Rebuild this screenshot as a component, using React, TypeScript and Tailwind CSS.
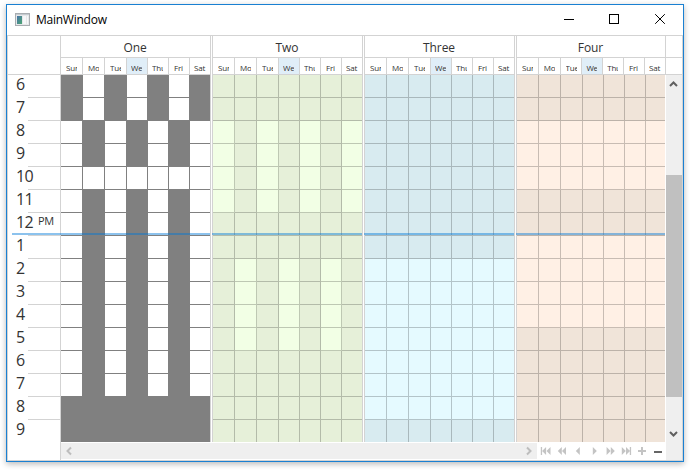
import React from 'react';

type Tone = { dark: string; light: string };
type Group = { name: string; tone: Tone; isLight: (hour: number, day: number) => boolean };

const DAYS = ['Sun', 'Mon', 'Tue', 'Wed', 'Thu', 'Fri', 'Sat'];
const DAY_WIDTHS = ['w-[22px]', 'w-[22px]', 'w-[22px]', 'w-[21px]', 'w-[21px]', 'w-[21px]', 'flex-1'];
const LABEL_WIDTHS = ['ml-px w-[11px]', 'ml-px w-[11px]', 'ml-px w-[11px]', 'w-[11px]', 'w-[11px]', 'ml-px w-[11px]', 'w-3'];
const HOURS = ['6', '7', '8', '9', '10', '11', '12', '1', '2', '3', '4', '5', '6', '7', '8', '9'];

const GROUPS: Group[] = [
  {
    name: 'One',
    tone: { dark: 'bg-[#808080] border-[#808080]', light: 'bg-white border-[#808080]' },
    isLight: (h, d) => (h < 2 ? d % 2 === 1 : h === 4 ? true : h < 14 ? d % 2 === 0 : false),
  },
  {
    name: 'Two',
    tone: { dark: 'bg-[#e6f0d9] border-[#b3bba9]', light: 'bg-[#f2ffe5] border-[#bec8b3]' },
    isLight: (h, d) => (h >= 2 && h < 6 && d % 2 === 0) || (h >= 8 && h < 12 && d % 2 === 1),
  },
  {
    name: 'Three',
    tone: { dark: 'bg-[#d8ebf0] border-[#a9b8bc]', light: 'bg-[#e5faff] border-[#b3c4c9]' },
    isLight: (h) => h >= 8 && h < 15,
  },
  {
    name: 'Four',
    tone: { dark: 'bg-[#f0e4d9] border-[#bcb2a9]', light: 'bg-[#fff0e5] border-[#c8bcb3]' },
    isLight: (h) => (h >= 2 && h < 5) || (h >= 7 && h < 11),
  },
];

function Calendar({ group, last }: { group: Group; last: boolean }) {
  return (
    <section className={`flex h-[406px] shrink-0 flex-col ${last ? 'w-[150px]' : 'mr-px w-[151px]'}`}>
      <header className="h-[39px] border-x border-[#d3d3d3]">
        <div className="h-[22px] border-b border-[#d3d3d3] pr-px text-center text-[12px] leading-[24px] tracking-[-0.1px] text-[#333]">{group.name}</div>
        <div className="flex h-[17px] border-b border-[#d3d3d3]">
          {DAYS.map((day, i) => (
            <div
              key={day}
              className={`${DAY_WIDTHS[i]} ${i < 6 ? 'border-r border-[#d3d3d3]' : ''} ${i === 3 ? 'bg-[#e0eef8]' : ''} h-4 px-1`}
            >
              <div
                className={`${LABEL_WIDTHS[i]} h-4 overflow-hidden whitespace-nowrap text-[8px] leading-[19px] tracking-[-0.2px] text-[#333]`}
              >
                {day}
              </div>
            </div>
          ))}
        </div>
      </header>
      <div className={`relative h-[367px] border-x border-l-[#d3d3d3] ${last ? 'border-r-white' : 'border-r-[#d3d3d3]'}`}>
        {HOURS.map((_, h) => (
          <div key={h} className={`flex ${h === 15 ? 'h-[22px]' : 'h-[23px]'}`}>
            {DAYS.map((day, d) => (
              <div
                key={day}
                className={`${DAY_WIDTHS[d]} ${group.isLight(h, d) ? group.tone.light : group.tone.dark} ${d < 6 ? 'border-r' : ''} ${h < 15 ? 'border-b' : ''}`}
              />
            ))}
          </div>
        ))}
        <div className="absolute -left-px right-0 top-[158px] h-0.5 bg-[#0078d7]/45" />
      </div>
    </section>
  );
}

function NavIcon({ d }: { d: string }) {
  return (
    <svg width="16" height="16" viewBox="-0.8 0 16 16" className="shrink-0">
      <path d={d} fill="#c4c4c4" />
    </svg>
  );
}

const NAV = [
  'M3 4h1.3v8H3zM8.3 4v8L4.3 8zM12.7 4v8L8.7 8z',
  'M8 4v8L4 8zM12.2 4v8L8.2 8z',
  'M10 4v8L6 8z',
  'M7 4v8l4-4z',
  'M4.8 4v8l4-4zM9 4v8l4-4z',
  'M4 4v8l4-4zM8.2 4v8l4-4zM12 4h1.3v8H12z',
  'M7.2 4h2v3h3v2h-3v3h-2V9h-3V7h3z',
];

export default function App() {
  return (
    <div className="h-[470px] w-[690px] overflow-hidden bg-white pl-1.5 pt-1 font-['Open_Sans','Noto_Sans',sans-serif]">
      <div className="h-[458px] w-[678px] border border-[#1a80d2] bg-white shadow-[0_2px_6px_rgba(0,0,0,0.28)]">
        <div className="flex h-[30px] items-center">
          <svg width="15" height="13" viewBox="0 0 15 13" className="ml-2 -mt-0.5">
            <defs>
              <linearGradient id="pane" x1="0" y1="0" x2="1" y2="1">
                <stop offset="0" stopColor="#4a74a8" />
                <stop offset="1" stopColor="#4ba672" />
              </linearGradient>
            </defs>
            <rect x=".5" y=".5" width="14" height="12" fill="#e6e8ea" stroke="#a9adb1" />
            <rect x="1" y="1" width="13" height="1" fill="#c5cbd0" />
            <rect x="2" y="3" width="5" height="8" fill="url(#pane)" />
            <rect x="8" y="3" width="3" height="8" fill="#f6f7f8" />
            <rect x="12" y="3" width="1" height="8" fill="#f6f7f8" />
          </svg>
          <span className="ml-1.5 text-[12px] leading-[16px] tracking-[-0.25px] text-black">MainWindow</span>
          <svg width="110" height="12" viewBox="0 0 110 12" className="ml-auto mr-[9px] -mt-0.5" stroke="#000" fill="none">
            <path d="M0 6.5h10" />
            <rect x="45.5" y="1.5" width="9" height="9" />
            <path d="M91.2 1.2l9.6 9.6M100.8 1.2l-9.6 9.6" />
          </svg>
        </div>
        <div className="flex h-[426px] border border-[#d3d3d3]">
          <div className="relative w-[52px] shrink-0">
            <div className="h-[39px] border-b border-[#d3d3d3]" />
            {HOURS.map((hour, i) => (
              <div key={i} className="flex h-[23px] text-[#333]">
                <div className="w-5 shrink-0 whitespace-nowrap pl-2 text-[16px] leading-[18px] tracking-[-0.6px]">{hour}</div>
                <div className={`h-[23px] flex-1 pl-2.5 text-[11px] leading-[16px] tracking-[-0.3px] ${i < 15 ? 'border-b border-[#d3d3d3]' : ''}`}>
                  {i === 6 ? 'PM' : ''}
                </div>
              </div>
            ))}
            <div className="absolute left-1 right-0 top-[197px] h-0.5 bg-[#0078d7]/45" />
          </div>
          <div className="flex h-[424px] w-[622px] flex-col">
            <div className="flex h-[406px]">
              {GROUPS.map((group, i) => (
                <Calendar key={group.name} group={group} last={i === 3} />
              ))}
              <div className="w-4 shrink-0">
                <div className="h-[22px] border-b border-[#d3d3d3]" />
                <div className="h-[17px] border-b border-[#d3d3d3]" />
                <div className="h-[367px] bg-[#efefef]">
                  <svg width="16" height="100" viewBox="0 0 16 100" fill="none" stroke="#606060" strokeWidth="2">
                    <path d="M4 11l3.500-3.500L11 11" />
                  </svg>
                  <div className="h-[222px] bg-[#c0c0c0]" />
                  <svg width="16" height="45" viewBox="0 0 16 45" fill="none" stroke="#606060" strokeWidth="2">
                    <path d="M4 35l3.500 3.500L11 35" />
                  </svg>
                </div>
              </div>
            </div>
            <div className="flex h-[18px] border-l border-[#d3d3d3]">
              <div className="mt-px flex h-4 w-[476px] justify-between bg-[#efefef]">
                <svg width="16" height="16" viewBox="0 0 16 16" fill="none" stroke="#bdbdbd" strokeWidth="2">
                  <path d="M10 4.500L6.500 8l3.500 3.500" />
                </svg>
                <svg width="16" height="16" viewBox="0 0 16 16" fill="none" stroke="#bdbdbd" strokeWidth="2">
                  <path d="M6 4.500L9.500 8L6 11.500" />
                </svg>
              </div>
              <div className="mt-px flex h-4 w-[129px]">
                {NAV.map((d) => (
                  <NavIcon key={d} d={d} />
                ))}
                <svg width="16" height="16" viewBox="0 0 16 16">
                  <path d="M5 8h8v2H5z" fill="#666" />
                </svg>
              </div>
              <div className="h-[18px] w-4 bg-[#efefef]" />
            </div>
          </div>
        </div>
      </div>
    </div>
  );
}
